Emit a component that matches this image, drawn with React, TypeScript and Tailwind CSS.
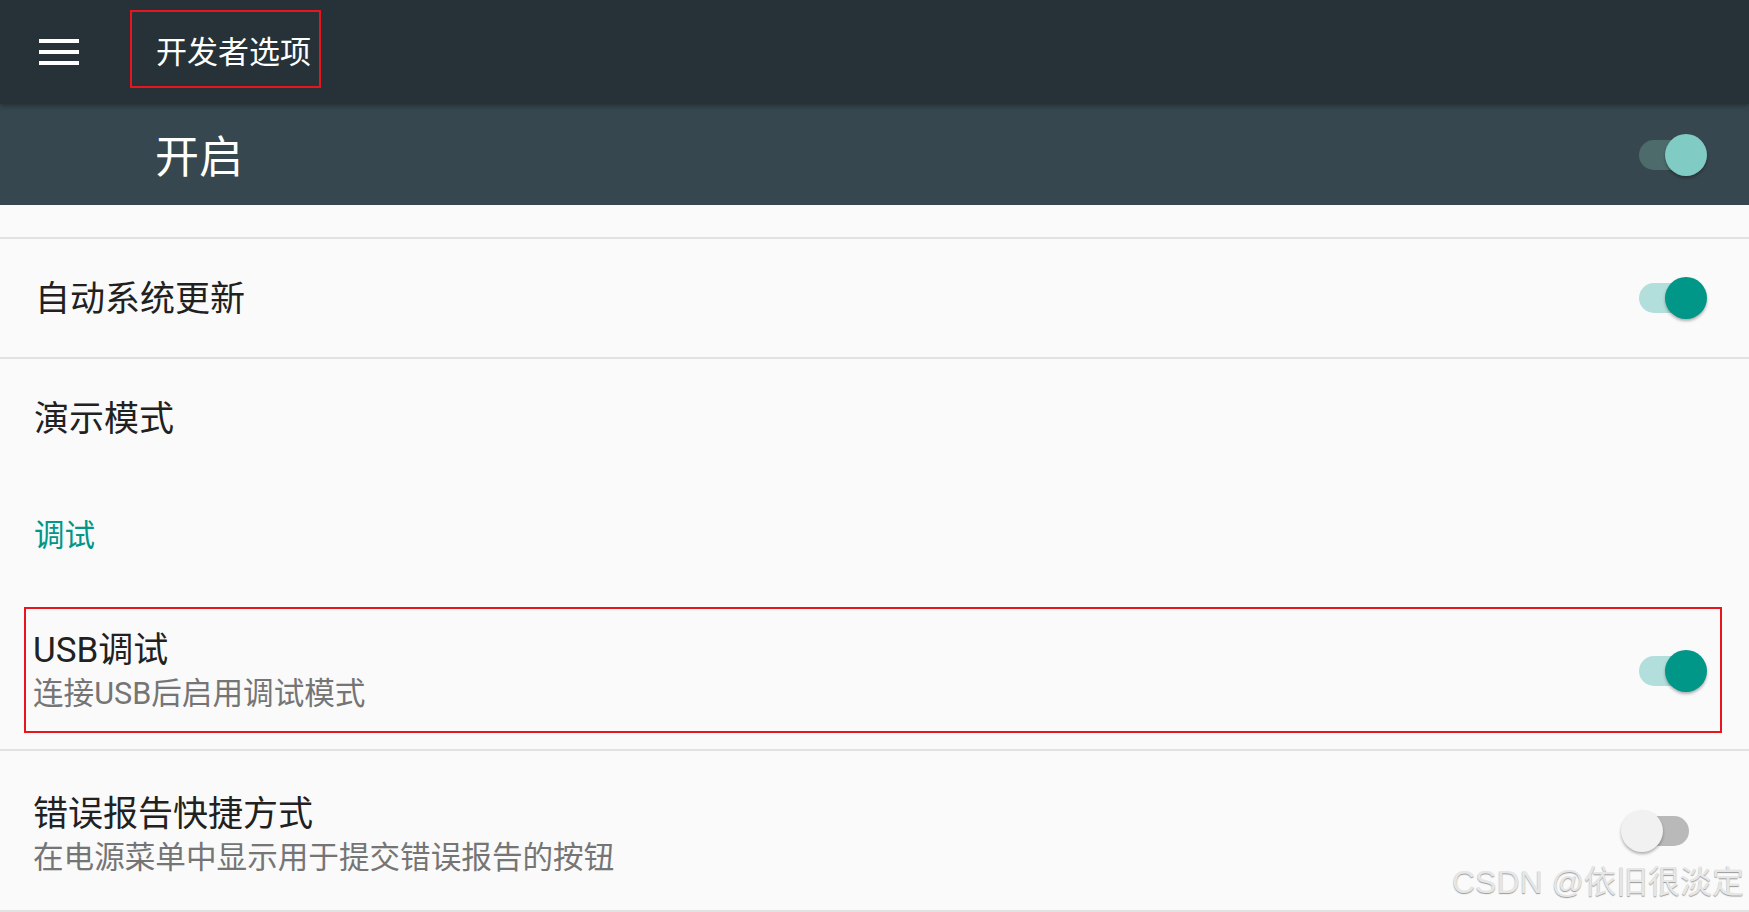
import React from 'react';

const FONT = "font-['Roboto','Noto_Sans_CJK_SC',sans-serif]";

type SwitchProps = { on: boolean; dark?: boolean };

const Switch: React.FC<SwitchProps> = ({ on, dark }) => {
  const track = on ? (dark ? 'bg-[#4e6b6c]' : 'bg-[#b2dfdb]') : 'bg-[#b9b9b9]';
  const thumb = on ? (dark ? 'bg-[#80cbc4] left-[44px]' : 'bg-[#009688] left-[44px]') : 'bg-[#f1f1f1] left-0';
  return (
    <div className="relative w-[86px] h-[42px] shrink-0">
      <div className={`absolute left-[18px] right-[18px] top-[6px] h-[30px] rounded-full ${track}`} />
      <div className={`absolute top-0 w-[42px] h-[42px] rounded-full shadow-[0_2px_3px_rgba(0,0,0,0.3)] ${thumb}`} />
    </div>
  );
};

const Divider = () => <div className="h-[2px] bg-[#e2e2e2]" />;

export default function App() {
  return (
    <div className={`relative w-[1749px] h-[912px] overflow-hidden bg-[#fafafa] ${FONT}`}>
      {/* toolbar */}
      <div className="relative z-10 h-[104px] bg-[#263238] flex items-center shadow-[0_2px_5px_rgba(0,0,0,0.35)]">
        <div className="ml-[39px] w-[40px] flex flex-col gap-[7px]">
          <div className="h-[4px] bg-white" />
          <div className="h-[4px] bg-white" />
          <div className="h-[4px] bg-white" />
        </div>
        <div className="ml-[77px] pt-[2px] text-[31px] leading-[40px] text-white">开发者选项</div>
        <div className="absolute left-[130px] top-[10px] w-[191px] h-[78px] border-2 border-[#e8141e]" />
      </div>

      {/* master switch bar */}
      <div className="h-[101px] bg-[#37474f] flex items-center justify-between pr-[42px]">
        <div className="ml-[155px] pt-[6px] text-[44px] leading-[50px] text-white">开启</div>
        <Switch on dark />
      </div>

      <div className="h-[32px]" />
      <Divider />

      <div className="h-[118px] flex items-center justify-between pl-[35px] pr-[42px]">
        <div className="pt-[4px] text-[35px] leading-[40px] text-[#212121]">自动系统更新</div>
        <Switch on />
      </div>
      <Divider />

      <div className="h-[118px] flex items-center pl-[34px]">
        <div className="pt-[4px] text-[35px] leading-[40px] text-[#212121]">演示模式</div>
      </div>

      <div className="h-[116px] flex items-center pl-[34px]">
        <div className="pt-[2px] text-[30.5px] leading-[36px] text-[#009688]">调试</div>
      </div>

      <div className="relative h-[156px] flex items-center justify-between pl-[33px] pr-[42px]">
        <div className="flex flex-col pt-[6px]">
          <div className="text-[35px] leading-[40px] text-[#212121]">USB调试</div>
          <div className="text-[30.6px] leading-[46px] text-[#757575]">连接USB后启用调试模式</div>
        </div>
        <Switch on />
        <div className="absolute left-[24px] top-[14px] w-[1698px] h-[126px] border-2 border-[#e8141e]" />
      </div>
      <Divider />

      <div className="h-[159px] flex items-center justify-between pl-[33px] pr-[42px]">
        <div className="flex flex-col pt-[14px]">
          <div className="text-[35px] leading-[40px] text-[#212121]">错误报告快捷方式</div>
          <div className="text-[30.6px] leading-[46px] text-[#757575]">在电源菜单中显示用于提交错误报告的按钮</div>
        </div>
        <Switch on={false} />
      </div>
      <Divider />

      <div className="absolute right-[5px] top-[863px] text-[32px] leading-[38px] text-[#e6e6e6] font-['Liberation_Sans','Noto_Sans_CJK_SC',sans-serif] [text-shadow:0_1px_1px_#9a9a9a]">
        CSDN @依旧很淡定
      </div>
    </div>
  );
}
